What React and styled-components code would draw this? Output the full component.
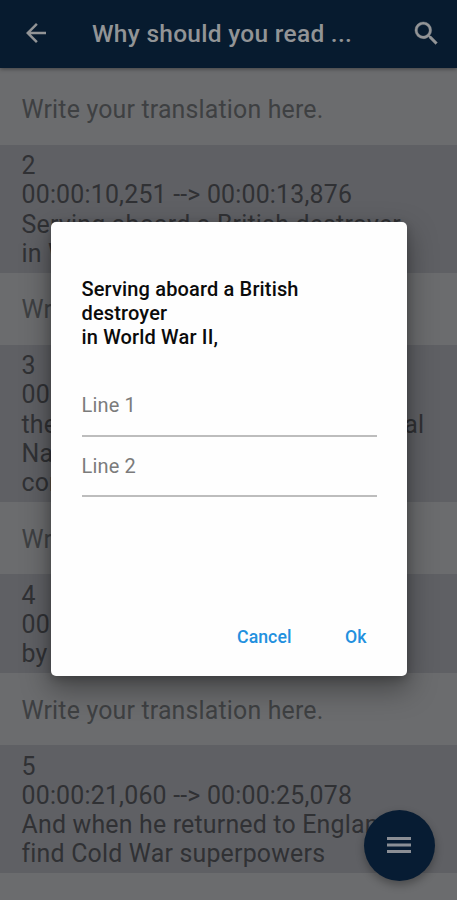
import React from "react";
import styled, { createGlobalStyle } from "styled-components";

const GlobalStyle = createGlobalStyle`
  * { box-sizing: border-box; }
  body { margin: 0; background: #6b6c6e; font-family: Roboto, "Liberation Sans", sans-serif; }
  button, input { font-family: inherit; border: 0; padding: 0; background: none; }
`;

const Screen = styled.div`
  position: relative;
  display: flex;
  flex-direction: column;
  width: 457px;
  height: 900px;
  overflow: hidden;
  background: #6b6c6e;
`;

const AppBar = styled.header`
  position: relative;
  display: flex;
  align-items: center;
  flex: none;
  height: 68px;
  padding: 0 15px 2px 20px;
  background: #071b2f;
  color: #929496;
  box-shadow: 0 1px 4px rgba(0, 0, 0, 0.4);
`;

const IconButton = styled.button`
  display: flex;
  flex: none;
  align-items: center;
  justify-content: center;
  width: 32px;
  height: 32px;
  color: inherit;
`;

const AppTitle = styled.h1`
  flex: 1;
  margin: 2px 0 0 40px;
  font-size: 24.5px;
  line-height: 30px;
  font-weight: 500;
  letter-spacing: 0.28px;
  white-space: nowrap;
`;

const Feed = styled.main`
  padding-top: 5px;
`;

const Translation = styled.div`
  height: 71.5px;
  padding: 22.3px 21.5px 0;
  font-size: 24.9px;
  line-height: 29.2px;
  letter-spacing: 0.18px;
  color: #3e4042;
  white-space: nowrap;
`;

const Cue = styled.section`
  padding: 6.7px 21.5px 5.3px;
  background: #5f6064;
  color: #303134;
  font-size: 24.9px;
  line-height: 29.15px;
  letter-spacing: 0.2px;
  white-space: nowrap;
`;

const CueLine = styled.div``;

const MenuFab = styled.button`
  position: absolute;
  left: 364px;
  top: 809.5px;
  display: flex;
  align-items: center;
  justify-content: center;
  width: 71px;
  height: 71px;
  padding-right: 1px;
  border-radius: 50%;
  background: #071c33;
  color: #8b8f96;
  box-shadow: 0 4px 8px rgba(0, 0, 0, 0.3);
`;

const Overlay = styled.div`
  position: absolute;
  inset: 0;
  display: flex;
  align-items: center;
  justify-content: center;
  padding-bottom: 2px;
`;

const Dialog = styled.div`
  display: flex;
  flex-direction: column;
  width: 356px;
  height: 454px;
  padding: 55px 30px 20px 31px;
  border-radius: 5px;
  background: #fefefe;
  box-shadow: 0 12px 28px 2px rgba(0, 0, 0, 0.34), 0 3px 9px rgba(0, 0, 0, 0.2);
`;

const DialogTitle = styled.h2`
  margin: 0;
  font-size: 20px;
  line-height: 24.2px;
  font-weight: 500;
  letter-spacing: 0.15px;
  color: #0b0b0b;
`;

const Fields = styled.div`
  display: flex;
  flex-direction: column;
  margin-top: 26.4px;
`;

const Field = styled.input`
  height: 60.5px;
  width: 100%;
  border-bottom: 2px solid #bdbdbd;
  border-radius: 0;
  outline: none;
  font-size: 20px;
  letter-spacing: 0.15px;
  &::placeholder { color: #7b7b7b; opacity: 1; }
`;

const Actions = styled.div`
  display: flex;
  justify-content: flex-end;
  gap: 53.5px;
  margin-top: auto;
  padding-right: 10px;
`;

const ActionButton = styled.button`
  height: 39px;
  font-size: 17.7px;
  font-weight: 500;
  letter-spacing: 0.05px;
  color: #2290de;
`;

const entries = [
  ["2", "00:00:10,251 --> 00:00:13,876", "Serving aboard a British destroyer", "in World War II,"],
  ["3", "00:00:13,876 --> 00:00:17,060", "the young officer in his British Royal", "Navy was", "commended"],
  ["4", "00:00:17,060 --> 00:00:21,060", "by his peers."],
  ["5", "00:00:21,060 --> 00:00:25,078", "And when he returned to England to", "find Cold War superpowers"],
];

export default function App() {
  return (
    <Screen>
      <GlobalStyle />
      <AppBar>
        <IconButton aria-label="Back">
          <svg width="30" height="30" viewBox="0 0 24 24" fill="currentColor">
            <path d="M20 11H7.83l5.59-5.59L12 4l-8 8 8 8 1.41-1.41L7.83 13H20v-2z" />
          </svg>
        </IconButton>
        <AppTitle>Why should you read ...</AppTitle>
        <IconButton aria-label="Search">
          <svg width="31" height="31" viewBox="0 0 24 24" fill="currentColor" stroke="currentColor" strokeWidth="0.25">
            <path d="M15.5 14h-.79l-.28-.27A6.47 6.47 0 0 0 16 9.5 6.5 6.5 0 1 0 9.5 16c1.61 0 3.09-.59 4.23-1.57l.27.28v.79l5 4.99L20.49 19l-4.99-5zm-6 0C7.01 14 5 11.99 5 9.5S7.01 5 9.5 5 14 7.01 14 9.5 11.99 14 9.5 14z" />
          </svg>
        </IconButton>
      </AppBar>
      <Feed>
        <Translation>Write your translation here.</Translation>
        {entries.map((lines) => (
          <React.Fragment key={lines[0]}>
            <Cue>
              {lines.map((line) => (
                <CueLine key={line}>{line}</CueLine>
              ))}
            </Cue>
            <Translation>Write your translation here.</Translation>
          </React.Fragment>
        ))}
      </Feed>
      <MenuFab aria-label="Menu">
        <svg width="24" height="18" viewBox="0 0 24 18" fill="currentColor">
          <path d="M0 1h24v3H0zM0 7.5h24v3H0zM0 14h24v3H0z" />
        </svg>
      </MenuFab>
      <Overlay>
        <Dialog role="dialog">
          <DialogTitle>
            Serving aboard a British destroyer
            <br />
            in World War II,
          </DialogTitle>
          <Fields>
            <Field placeholder="Line 1" />
            <Field placeholder="Line 2" />
          </Fields>
          <Actions>
            <ActionButton>Cancel</ActionButton>
            <ActionButton>Ok</ActionButton>
          </Actions>
        </Dialog>
      </Overlay>
    </Screen>
  );
}
